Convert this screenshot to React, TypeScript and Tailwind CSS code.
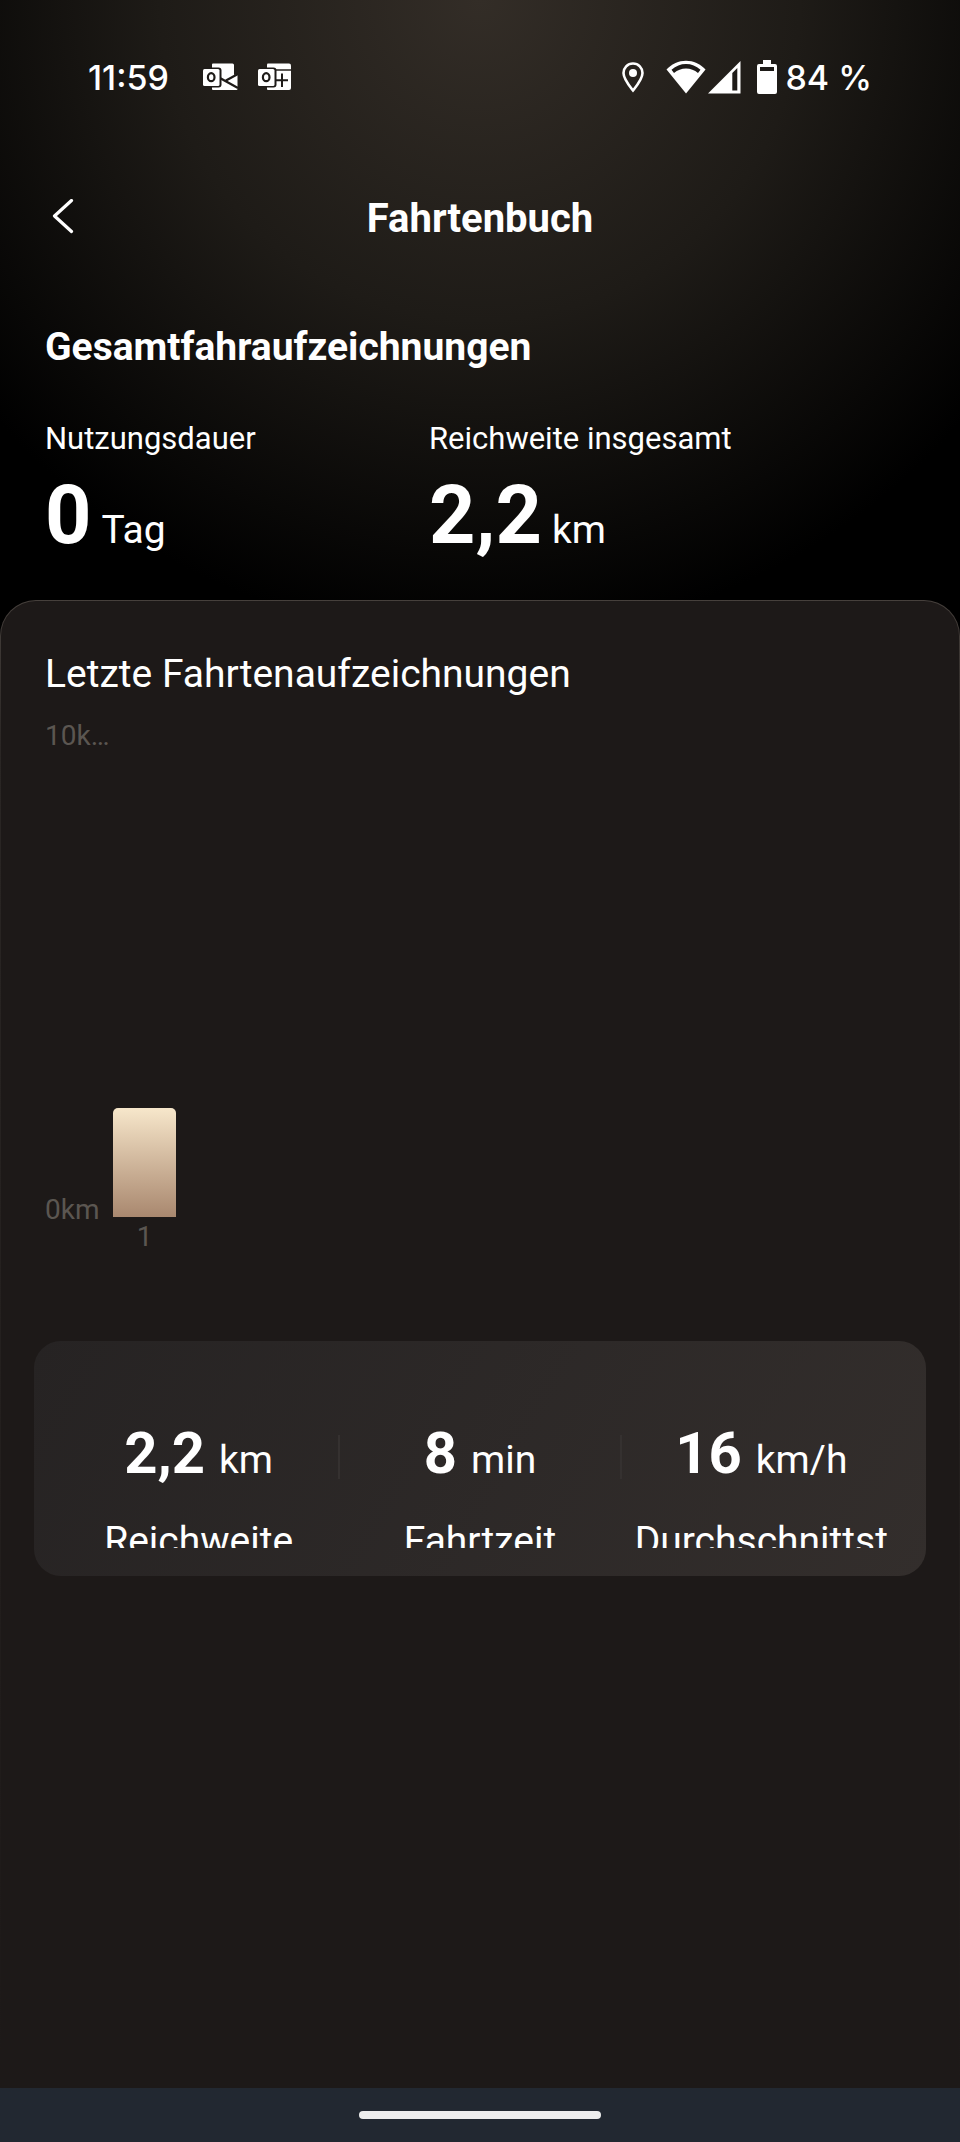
interface Metric {
    label: string;
    value: string;
    unit: string;
}

const totals: Metric[] = [
    { label: "Nutzungsdauer", value: "0", unit: "Tag" },
    { label: "Reichweite insgesamt", value: "2,2", unit: "km" },
];

const trip: Metric[] = [
    { label: "Reichweite", value: "2,2", unit: "km" },
    { label: "Fahrtzeit", value: "8", unit: "min" },
    { label: "Durchschnittst", value: "16", unit: "km/h" },
];

const MAX_KM = 10;
const rides = [{ day: "1", km: 2.2 }];

function MailIcon() {
    return (
        <svg width="35" height="28" viewBox="0 0 35 28" fill="#fff" aria-hidden="true">
            <path d="M10 .5h19.500q1.500 0 1.500 1.500v10l3.500-1v15q0 1-1 1H10q-1 0-1-1V1.500q0-1 1-1z" />
            <path d="M16 14.500L35 25M23 17.500L35 11" fill="none" stroke="#1e1b18" strokeWidth="2.400" />
            <rect x="-1" y="4.500" width="19.500" height="20" rx="3" fill="#1e1b18" />
            <rect x="0" y="6" width="16.500" height="17" rx="1.500" />
            <ellipse cx="8.200" cy="14.200" rx="3.300" ry="4" fill="none" stroke="#1e1b18" strokeWidth="2.200" />
        </svg>
    );
}

function CalendarIcon() {
    return (
        <svg width="33" height="28" viewBox="0 0 33 28" fill="#fff" aria-hidden="true">
            <path d="M10 .5h21q2 0 2 2v3.700H9V1.500q0-1 1-1z" />
            <path d="M9 7.800h24v17.200q0 2-2 2H10q-1 0-1-1z" />
            <path d="M24 10.500v13.500M18 17.300h12" fill="none" stroke="#1e1b18" strokeWidth="2" />
            <rect x="-1" y="4.500" width="19.500" height="20" rx="3" fill="#1e1b18" />
            <rect x="0" y="6" width="16.500" height="17" rx="1.500" />
            <ellipse cx="8.200" cy="14.200" rx="3.300" ry="4" fill="none" stroke="#1e1b18" strokeWidth="2.200" />
        </svg>
    );
}

function LocationIcon() {
    return (
        <svg width="22" height="31" viewBox="0 0 22 31" fill="none" aria-hidden="true">
            <path d="M11 1.500C5.500 1.500 1.500 5.800 1.500 11c0 6 6 13 9.500 17.500C14.500 24 20.500 17 20.500 11c0-5.200-4-9.500-9.500-9.500z" stroke="#fff" strokeWidth="2.600" />
            <circle cx="11" cy="11" r="4" fill="#fff" />
        </svg>
    );
}

function WifiIcon() {
    return (
        <svg width="40" height="34" viewBox="0 0 40 34" aria-hidden="true">
            <path d="M20 33.500L.5 9.500C6 4 12.500 .8 20 .8S34 4 39.500 9.500z" fill="#fff" />
            <path d="M5.500 9.800C10 6 14.500 4 20 4s10 2 14.500 5.800L32 13c-3.500-2.800-7.500-4.500-12-4.500S11.500 10.200 8 13z" fill="#1e1b18" />
        </svg>
    );
}

function SignalIcon() {
    return (
        <svg width="33" height="33" viewBox="0 0 33 33" aria-hidden="true">
            <path d="M0 32.500L32.500 0v32.500z" fill="#fff" />
            <path d="M24.300 12l5-5v22.500h-5z" fill="#1e1b18" />
        </svg>
    );
}

function BatteryIcon() {
    return (
        <svg width="20" height="34" viewBox="0 0 20 34" aria-hidden="true">
            <path d="M6 0h8v4h4q2 0 2 2v26q0 2-2 2H2q-2 0-2-2V6q0-2 2-2h4z" fill="#fff" />
            <path d="M3 7h14v4H3z" fill="#1e1b18" />
        </svg>
    );
}

function StatusBar() {
    return (
        <div className="flex h-11 items-center justify-between px-[88px] font-['Inter',sans-serif] text-[34px] font-medium">
            <div className="flex items-center">
                <span>11:59</span>
                <span className="ml-[34px] flex items-center gap-5">
                    <MailIcon />
                    <CalendarIcon />
                </span>
            </div>
            <div className="flex items-center">
                <LocationIcon />
                <span className="ml-[22px] flex items-center gap-0.5">
                    <WifiIcon />
                    <SignalIcon />
                </span>
                <span className="ml-4 flex items-center gap-2">
                    <BatteryIcon />
                    <span>84 %</span>
                </span>
            </div>
        </div>
    );
}

function RideChart() {
    return (
        <div className="mt-[22px] flex px-11 text-[28px] leading-8 text-[#5b5651]">
            <div className="flex h-[506px] w-[68px] flex-col justify-between">
                <span>10k…</span>
                <span>0km</span>
            </div>
            <div className="flex flex-1 gap-6">
                {rides.map((ride) => (
                    <div key={ride.day} className="w-[63px] text-center">
                        <div className="flex h-[497px] items-end">
                            <div
                                className="w-full rounded-t-[5px] bg-linear-to-b from-[#f7e7cb] to-[#a9886f]"
                                style={{ height: `${(ride.km / MAX_KM) * 100}%` }}
                            />
                        </div>
                        <div className="mt-1">{ride.day}</div>
                    </div>
                ))}
            </div>
        </div>
    );
}

function TripCard() {
    return (
        <div className="mx-[33px] mt-[88px] flex rounded-[27px] bg-[linear-gradient(120deg,#262323,#332e2c)] px-6 pt-[76px] pb-7">
            {trip.map((item, i) => (
                <div key={item.label} className="relative flex-1 text-center">
                    {i > 0 && <div className="absolute top-[18px] -left-px h-11 w-0.5 bg-[#353130]" />}
                    <div className="flex items-baseline justify-center gap-3.5">
                        <span className="text-[58px] leading-[72px] font-bold">{item.value}</span>
                        <span className="text-[39px]">{item.unit}</span>
                    </div>
                    {/* fixed height cuts the label off half way */}
                    <div className="mt-[27px] h-[31px] overflow-hidden text-[39px] leading-[48px]">{item.label}</div>
                </div>
            ))}
        </div>
    );
}

export default function App() {
    return (
        <div className="flex min-h-screen flex-col bg-black bg-[radial-gradient(circle_640px_at_50%_0,#332d27,#1e1b17_50%,#000)] font-['Roboto',sans-serif] text-white">
            <div className="pt-[55px]">
                <StatusBar />
            </div>

            <header className="mt-[90px] flex h-[60px] items-center px-11">
                <button type="button" aria-label="Zurück" className="flex w-11 cursor-pointer pl-2">
                    <svg width="24" height="40" viewBox="0 0 24 40" fill="none" aria-hidden="true">
                        <path d="M19.500 1.500L2.500 17l17 15.500" stroke="#fff" strokeWidth="3.200" strokeLinecap="round" strokeLinejoin="round" />
                    </svg>
                </button>
                <h1 className="flex-1 text-center text-[40px] leading-[48px] font-bold">Fahrtenbuch</h1>
                <div className="w-11" />
            </header>

            <section className="mt-[74px] px-[45px] pb-9">
                <h2 className="text-[39px] leading-[48px] font-bold">Gesamtfahraufzeichnungen</h2>
                <div className="mt-12 -mr-[45px] grid grid-cols-[384fr_531fr]">
                    {totals.map((item) => (
                        <div key={item.label}>
                            <div className="text-[31px] leading-10">{item.label}</div>
                            <div className="mt-[9px] flex items-baseline gap-2.5">
                                <span className="text-[81px] leading-[96px] font-bold">{item.value}</span>
                                <span className="text-[39px]">{item.unit}</span>
                            </div>
                        </div>
                    ))}
                </div>
            </section>

            <main className="flex flex-1 rounded-t-[36px] bg-linear-to-b from-[#46403c] via-[#2a2624] via-10% to-[#1d1918] px-px pt-px">
                <div className="w-full rounded-t-[35px] bg-[#1d1918] pt-[49px]">
                    <h2 className="px-11 text-[39px] leading-[48px]">Letzte Fahrtenaufzeichnungen</h2>
                    <RideChart />
                    <TripCard />
                </div>
            </main>

            <footer className="flex h-[54px] items-center justify-center bg-[#222831]">
                <div className="h-2 w-[242px] rounded-full bg-[#ededed]" />
            </footer>
        </div>
    );
}
